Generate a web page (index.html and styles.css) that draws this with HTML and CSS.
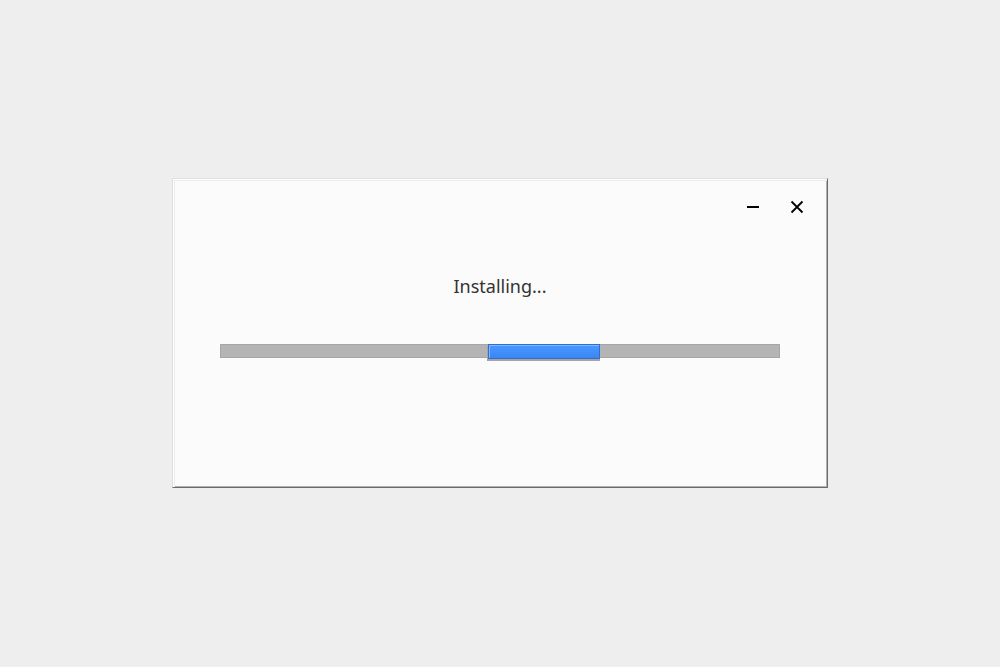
FILE: index.html
```html
<!DOCTYPE html>
<html>
  <head>
    <meta http-equiv="Content-Type" content="text/html;charset=utf-8" />
    <title>Installing</title>
    <link rel="stylesheet" href="styles.css">
  </head>
  <body>
    <div class="window">
      <div class="titlebar">
        <button class="ctl" title="Minimize">
          <svg width="14" height="14" viewBox="0 0 14 14"><path d="M1 7h12" stroke="#000" stroke-width="2"/></svg>
        </button>
        <button class="ctl" title="Close">
          <svg width="14" height="14" viewBox="0 0 14 14"><path d="M1.5 1.5l11 11M12.5 1.5l-11 11" stroke="#000" stroke-width="1.8"/></svg>
        </button>
      </div>
      <div class="status">Installing...</div>
      <div class="track">
        <div class="chunk"></div>
      </div>
    </div>
  </body>
</html>
```

FILE: styles.css
```css
html, body {
  margin: 0;
  height: 100%;
}

body {
  background-color: #eeeeee;
  font-family: "Noto Sans", "Open Sans", sans-serif;
  display: flex;
  align-items: center;
  justify-content: center;
}

.window {
  width: 654px;
  height: 308px;
  margin-top: -1px;
  background-color: #fbfbfb;
  border: 1px solid;
  border-color: #dedede #6b6b6b #6b6b6b #dedede;
  box-shadow: inset 1px 1px 0 #ffffff, inset 2px 2px 0 #ebebeb, inset -1px -1px 0 #b0b0b0;
  display: flex;
  flex-direction: column;
}

.titlebar {
  display: flex;
  justify-content: flex-end;
  gap: 12px;
  padding: 12px 14px 0 0;
}

.ctl {
  width: 32px;
  height: 32px;
  padding: 0;
  border: none;
  background: transparent;
  display: flex;
  align-items: center;
  justify-content: center;
}

.status {
  margin-top: 51px;
  text-align: center;
  font-size: 18px;
  line-height: 24px;
  color: #333333;
}

.track {
  position: relative;
  margin: 46px 47px 0 47px;
  height: 12px;
  background-color: #b4b4b4;
  border: 1px solid #a6a6a6;
}

.chunk {
  position: absolute;
  left: 267px;
  top: -1px;
  width: 110px;
  height: 13px;
  background: linear-gradient(#4a98ff, #3a86f5);
  border: 1px solid #2f6fd0;
  box-shadow: inset 1px 1px 0 #80b8ff, 0 2px 0 #a4a4a4, -1px 2px 0 #a4a4a4;
}
```
